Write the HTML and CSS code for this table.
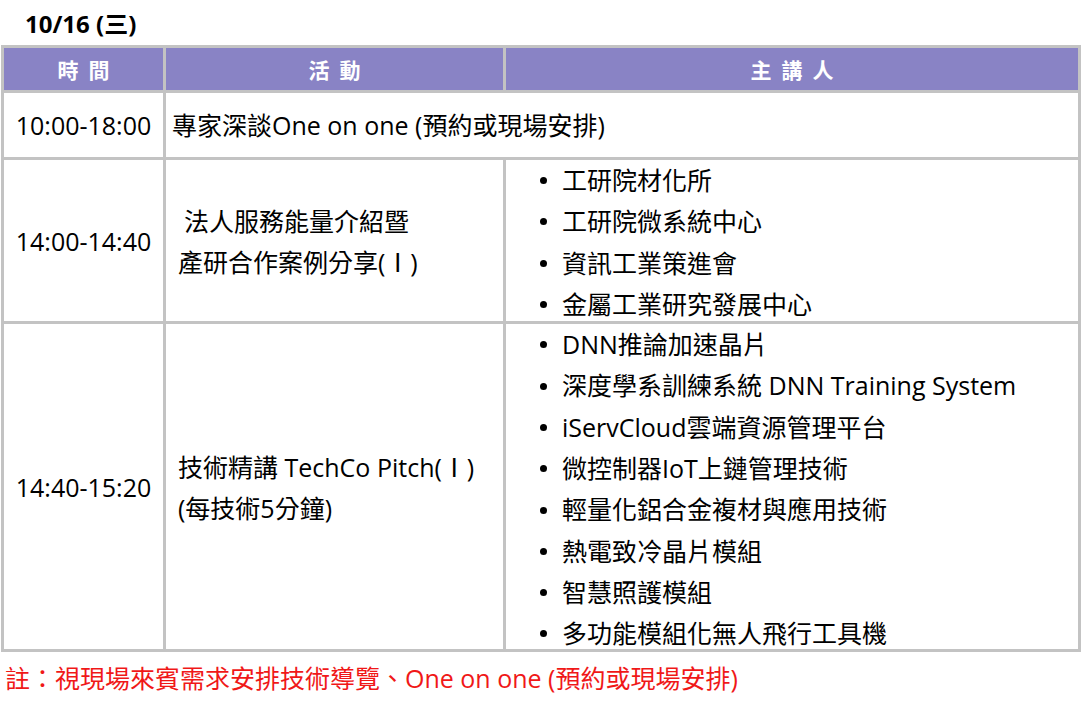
FILE: index.html
```html
<!DOCTYPE html>
<html lang="zh-Hant">
<head>
<meta charset="utf-8">
<link rel="stylesheet" href="styles.css">
</head>
<body>
<div class="page">
  <h1 class="date">10/16 (三)</h1>
  <table class="agenda">
    <colgroup>
      <col class="c-time"><col class="c-act"><col class="c-spk">
    </colgroup>
    <thead>
      <tr class="head">
        <th>時間</th>
        <th>活動</th>
        <th>主講人</th>
      </tr>
    </thead>
    <tbody>
      <tr class="r1">
        <td class="time">10:00-18:00</td>
        <td class="act act-wide" colspan="2">專家深談One on one (預約或現場安排)</td>
      </tr>
      <tr class="r2">
        <td class="time">14:00-14:40</td>
        <td class="act"><span class="lead">法人服務能量介紹暨</span><br>產研合作案例分享(Ⅰ)</td>
        <td class="spk">
          <ul class="list list-4">
            <li>工研院材化所</li>
            <li>工研院微系統中心</li>
            <li>資訊工業策進會</li>
            <li>金屬工業研究發展中心</li>
          </ul>
        </td>
      </tr>
      <tr class="r3">
        <td class="time">14:40-15:20</td>
        <td class="act">技術精講 TechCo Pitch(Ⅰ)<br>(每技術5分鐘)</td>
        <td class="spk">
          <ul class="list list-8">
            <li>DNN推論加速晶片</li>
            <li>深度學系訓練系統 DNN Training System</li>
            <li>iServCloud雲端資源管理平台</li>
            <li>微控制器IoT上鏈管理技術</li>
            <li>輕量化鋁合金複材與應用技術</li>
            <li>熱電致冷晶片模組</li>
            <li>智慧照護模組</li>
            <li>多功能模組化無人飛行工具機</li>
          </ul>
        </td>
      </tr>
    </tbody>
  </table>
  <p class="note">註：視現場來賓需求安排技術導覽、One on one (預約或現場安排)</p>
</div>
</body>
</html>
```

FILE: styles.css
```css
html, body {
  margin: 0;
  padding: 0;
  background: #ffffff;
}

body {
  font-family: "Open Sans", "Noto Sans CJK TC", sans-serif;
  color: #000000;
}

.page {
  width: 1084px;
}

.date {
  margin: 0;
  height: 45px;
  padding-left: 25px;
  font-size: 24px;
  font-weight: 700;
  line-height: 48px;
  box-sizing: border-box;
}

.agenda {
  margin-left: 1px;
  border-collapse: separate;
  border-spacing: 0;
  border-top: 3px solid #c3c3c3;
  border-left: 3px solid #c3c3c3;
  table-layout: fixed;
  width: 1080px;
}

.c-time { width: 162px; }
.c-act { width: 340px; }
.c-spk { width: 575px; }

.agenda th,
.agenda td {
  border-right: 3px solid #c3c3c3;
  border-bottom: 3px solid #c3c3c3;
  padding: 0;
  box-sizing: border-box;
}

.head th {
  height: 45px;
  background: #8983c5;
  color: #ffffff;
  font-family: "Noto Sans CJK TC", sans-serif;
  font-size: 21px;
  font-weight: 700;
  letter-spacing: 10px;
  text-indent: 10px;
  text-align: center;
  vertical-align: middle;
}

.r1 td { height: 67px; }
.r2 td { height: 164px; }
.r3 td { height: 328px; }

.time {
  text-align: center;
  vertical-align: middle;
  font-size: 25px;
}

.act {
  vertical-align: middle;
  font-size: 25px;
  line-height: 41px;
  padding-left: 12px !important;
}

.act-wide {
  padding-left: 6px !important;
}

.lead {
  padding-left: 6px;
}

.r2 .act { padding-top: 3px !important; }
.r3 .act { padding-top: 3px !important; }

.spk {
  vertical-align: top;
  font-size: 25px;
}

.list {
  margin: 0;
  padding: 0 0 0 34px;
  list-style: none;
}

.list-4 {
  margin-bottom: -4px;
}

.list-8 {
  margin-bottom: -7px;
}

.list li {
  line-height: 41.3px;
  display: flex;
  align-items: center;
}

.list li::before {
  content: "";
  width: 7px;
  height: 7px;
  border-radius: 50%;
  background: #000000;
  margin-right: 15px;
  flex: none;
}

.note {
  margin: 0 0 0 5px;
  color: #f01818;
  font-size: 25px;
  line-height: 52px;
}
```
